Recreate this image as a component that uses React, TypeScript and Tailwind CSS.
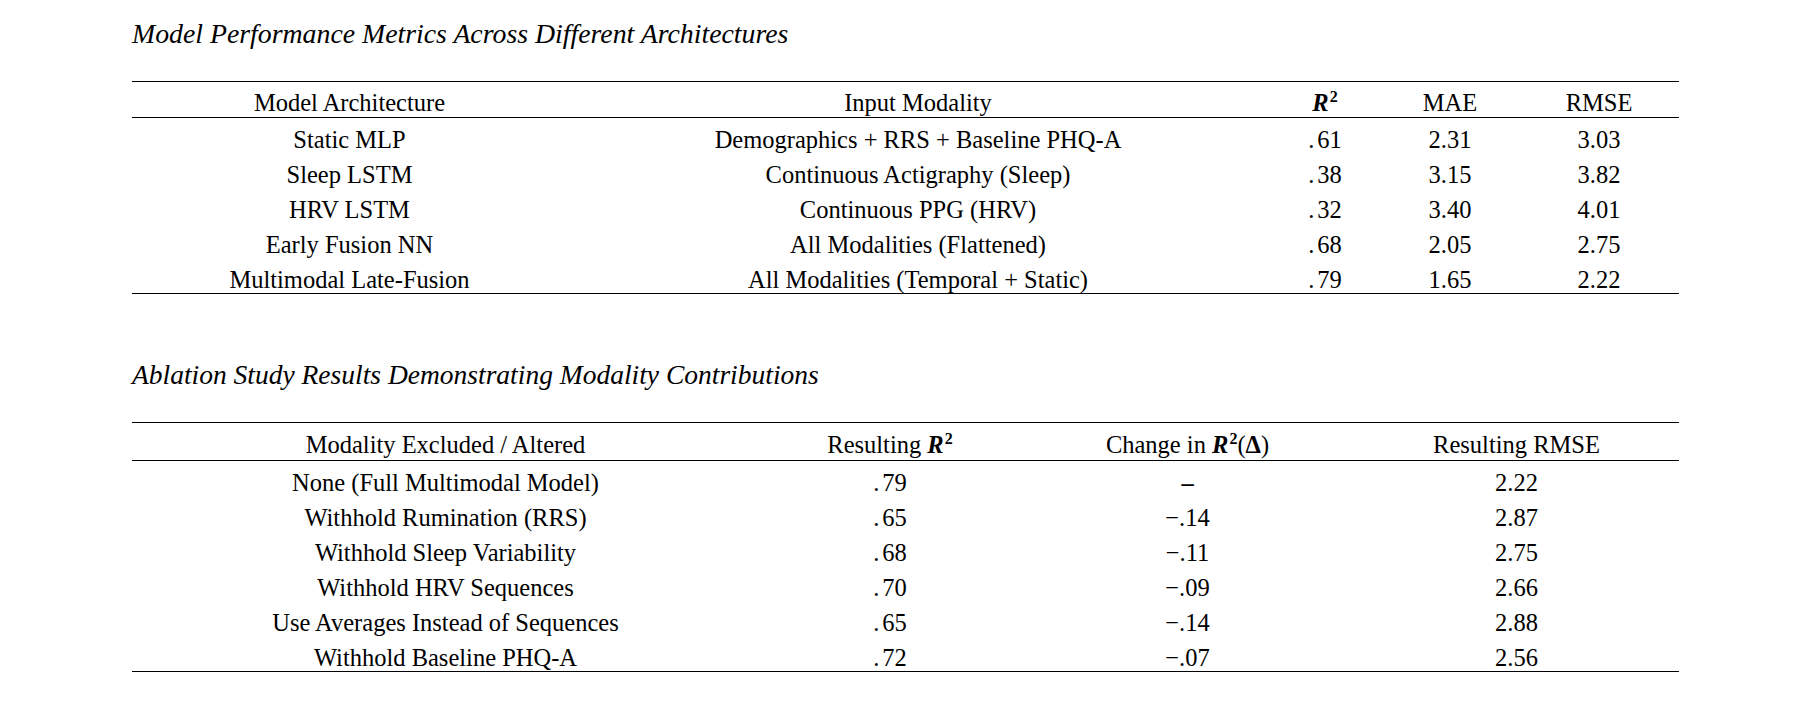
import React from "react";

const serif = { fontFamily: '"Liberation Serif", "Times New Roman", serif' };

function R2() {
  return (
    <span className="font-bold italic">
      R<sup className="not-italic font-bold text-[16px] relative -top-[9px] ml-[1px]">2</sup>
    </span>
  );
}

function Dot({ v }: { v: string }) {
  return (
    <span>
      .<span className="ml-[3px]">{v}</span>
    </span>
  );
}

const t1 = [
  ["Static MLP", "Demographics + RRS + Baseline PHQ-A", "61", "2.31", "3.03"],
  ["Sleep LSTM", "Continuous Actigraphy (Sleep)", "38", "3.15", "3.82"],
  ["HRV LSTM", "Continuous PPG (HRV)", "32", "3.40", "4.01"],
  ["Early Fusion NN", "All Modalities (Flattened)", "68", "2.05", "2.75"],
  ["Multimodal Late-Fusion", "All Modalities (Temporal + Static)", "79", "1.65", "2.22"],
];

const t2 = [
  ["None (Full Multimodal Model)", "79", "–", "2.22"],
  ["Withhold Rumination (RRS)", "65", "−.14", "2.87"],
  ["Withhold Sleep Variability", "68", "−.11", "2.75"],
  ["Withhold HRV Sequences", "70", "−.09", "2.66"],
  ["Use Averages Instead of Sequences", "65", "−.14", "2.88"],
  ["Withhold Baseline PHQ-A", "72", "−.07", "2.56"],
];

export default function App() {
  return (
    <div className="w-[1815px] h-[714px] bg-white text-black" style={serif}>
      <div className="pl-[132px] w-[1679px]">
        <div className="pt-[18px] h-[50px] text-[27.8px] italic leading-[32px]">
          Model Performance Metrics Across Different Architectures
        </div>
        <div className="mt-[31px] border-t border-b border-black text-[24.5px]">
          <div className="grid grid-cols-[435px_702px_112px_138px_160px] h-[36px] border-b border-black pt-[8px] leading-[26px] text-center">
            <div>Model Architecture</div>
            <div>Input Modality</div>
            <div><R2 /></div>
            <div>MAE</div>
            <div>RMSE</div>
          </div>
          {t1.map((r) => (
            <div key={r[0]} className="grid grid-cols-[435px_702px_112px_138px_160px] h-[35px] pt-[9px] leading-[26px] text-center">
              <div>{r[0]}</div>
              <div>{r[1]}</div>
              <div><Dot v={r[2]} /></div>
              <div>{r[3]}</div>
              <div>{r[4]}</div>
            </div>
          ))}
        </div>
        <div className="mt-[65px] h-[50px] text-[27.5px] italic leading-[32px]">
          Ablation Study Results Demonstrating Modality Contributions
        </div>
        <div className="mt-[13px] border-t border-b border-black text-[24.5px]">
          <div className="grid grid-cols-[627px_262px_333px_325px] h-[38px] border-b border-black pt-[9px] leading-[26px] text-center">
            <div>Modality Excluded / Altered</div>
            <div>Resulting <R2 /></div>
            <div>
              Change in <R2 />(<span className="font-bold">Δ</span>)
            </div>
            <div>Resulting RMSE</div>
          </div>
          {t2.map((r) => (
            <div key={r[0]} className="grid grid-cols-[627px_262px_333px_325px] h-[35px] pt-[9px] leading-[26px] text-center">
              <div>{r[0]}</div>
              <div><Dot v={r[1]} /></div>
              <div className={r[2] === "–" ? "font-bold" : ""}>{r[2]}</div>
              <div>{r[3]}</div>
            </div>
          ))}
        </div>
      </div>
    </div>
  );
}
